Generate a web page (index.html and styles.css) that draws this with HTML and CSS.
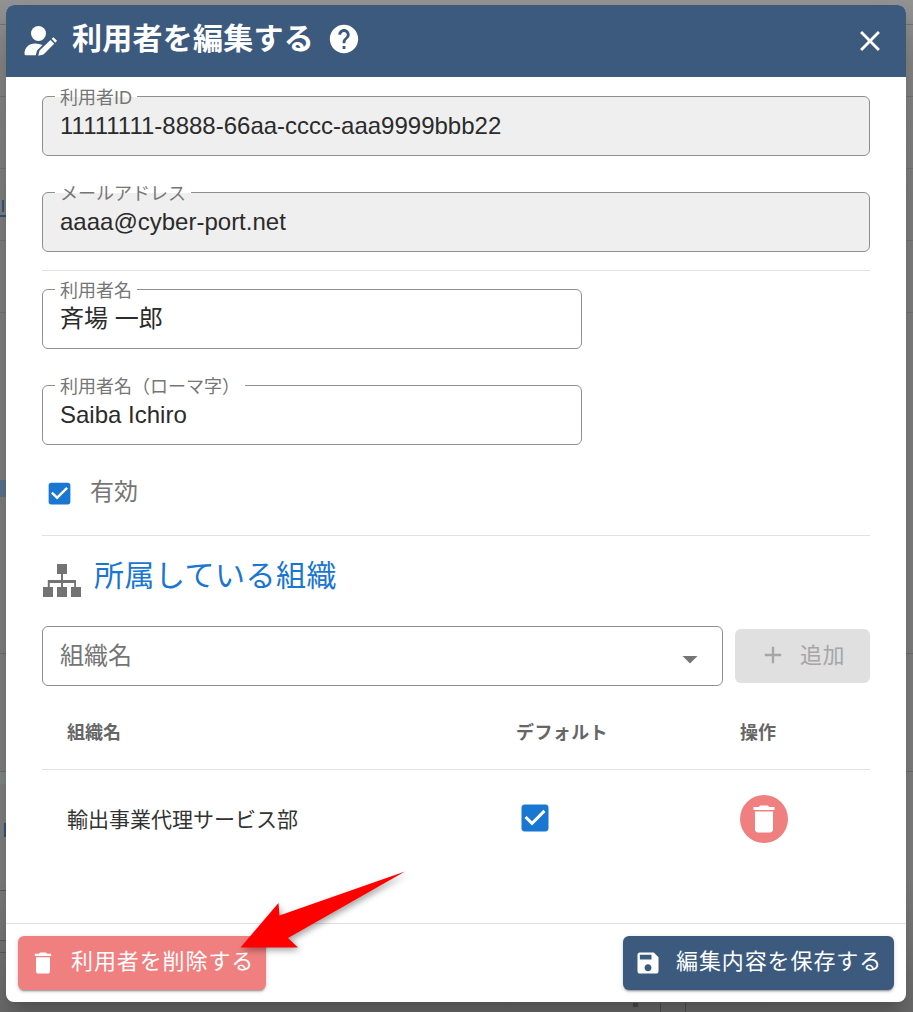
FILE: index.html
```html
<!DOCTYPE html>
<html lang="ja">
<head>
<meta charset="utf-8">
<title>利用者を編集する</title>
<link rel="stylesheet" href="styles.css">
</head>
<body>
<div class="dialog">
  <header class="dialog-head">
    <svg class="i-user" viewBox="0 0 33 30"><circle cx="14.500" cy="7.500" r="7.500"/><path d="M.5 27.500c0-6 4.500-10 10.500-10 2.500 0 5 .5 7.500 1.500L13 24.500l-1.200 4.700H2c-1 0-1.500-.5-1.500-1.700z"/><path d="M14.300 29.700l1.200-5.200L26.500 14l3.700 3.800L19.500 28.500zM27.700 12.800l1.800-1.500 3.500 3.500-1.700 2z"/></svg>
    <h1 class="dialog-title">利用者を編集する</h1>
    <svg class="i-help" viewBox="0 0 24 24"><path d="M12 2C6.480 2 2 6.480 2 12s4.480 10 10 10 10-4.480 10-10S17.520 2 12 2zm1 17h-2v-2h2v2zm2.070-7.750l-.9.920C13.450 12.900 13 13.500 13 15h-2v-.5c0-1.100.45-2.100 1.170-2.830l1.240-1.260c.37-.36.59-.86.59-1.410 0-1.100-.9-2-2-2s-2 .9-2 2H8c0-2.210 1.790-4 4-4s4 1.790 4 4c0 .88-.36 1.680-.93 2.250z"/></svg>
    <svg class="i-close" viewBox="0 0 24 24"><path d="M19 6.410L17.590 5 12 10.590 6.410 5 5 6.410 10.590 12 5 17.590 6.410 19 12 13.410 17.590 19 19 17.590 13.410 12z"/></svg>
  </header>

  <main class="dialog-body">
    <div class="field field-readonly first">
      <span class="field-label">利用者ID</span>
      <span class="field-value">11111111-8888-66aa-cccc-aaa9999bbb22</span>
    </div>
    <div class="field field-readonly">
      <span class="field-label">メールアドレス</span>
      <span class="field-value">aaaa@cyber-port.net</span>
    </div>
    <hr class="rule rule-a">
    <div class="field field-short">
      <span class="field-label">利用者名</span>
      <span class="field-value">斉場 一郎</span>
    </div>
    <div class="field field-short">
      <span class="field-label">利用者名（ローマ字）</span>
      <span class="field-value">Saiba Ichiro</span>
    </div>
    <div class="active-row">
      <svg class="i-check" viewBox="0 0 24 24"><path d="M19 3H5c-1.110 0-2 .9-2 2v14c0 1.100.89 2 2 2h14c1.100 0 2-.9 2-2V5c0-1.110-.89-2-2-2zm-9 14l-5-5 1.410-1.410L10 14.170l7.590-7.590L19 8l-9 9z"/></svg>
      <span class="active-label">有効</span>
    </div>
    <hr class="rule">
    <div class="section-head">
      <svg class="i-org" viewBox="0 0 38 34"><path d="M14 0h10v10h-4v6H33v7h5v10H28V23h3.200v-4H20v4h4v10H14V23h4v-4H6.800v4H10v10H0V23h4.800v-7H18v-6h-4z"/></svg>
      <h2 class="section-title">所属している組織</h2>
    </div>
    <div class="org-picker">
      <div class="field field-select">
        <span class="field-placeholder">組織名</span>
        <svg class="i-drop" viewBox="0 0 24 24"><path d="M7 10l5 5 5-5z"/></svg>
      </div>
      <div class="btn-add">
        <svg class="i-plus" viewBox="0 0 24 24"><path d="M19 13h-6v6h-2v-6H5v-2h6V5h2v6h6v2z"/></svg>
        <span class="btn-add-text">追加</span>
      </div>
    </div>
    <div class="org-row org-row-head">
      <span class="col-name">組織名</span>
      <span class="col-default th-spaced">デフォルト</span>
      <span class="col-op">操作</span>
    </div>
    <div class="org-row org-row-item">
      <span class="col-name">輸出事業代理サービス部</span>
      <span class="col-default"><svg class="i-check-lg" viewBox="0 0 24 24"><path d="M19 3H5c-1.110 0-2 .9-2 2v14c0 1.100.89 2 2 2h14c1.100 0 2-.9 2-2V5c0-1.110-.89-2-2-2zm-9 14l-5-5 1.410-1.410L10 14.170l7.590-7.590L19 8l-9 9z"/></svg></span>
      <span class="col-op"><span class="btn-round"><svg class="i-trash-lg" viewBox="0 0 24 24"><path d="M6 19c0 1.100.9 2 2 2h8c1.100 0 2-.9 2-2V7H6v12zM19 4h-3.500l-1-1h-5l-1 1H5v2h14V4z"/></svg></span></span>
    </div>
  </main>

  <footer class="dialog-foot">
    <div class="btn btn-danger">
      <svg class="i-btn" viewBox="0 0 24 24"><path d="M6 19c0 1.100.9 2 2 2h8c1.100 0 2-.9 2-2V7H6v12zM19 4h-3.500l-1-1h-5l-1 1H5v2h14V4z"/></svg>
      <span class="btn-text">利用者を削除する</span>
    </div>
    <div class="btn btn-primary">
      <svg class="i-btn" viewBox="0 0 24 24"><path d="M17 3H5c-1.110 0-2 .9-2 2v14c0 1.100.89 2 2 2h14c1.100 0 2-.9 2-2V7l-4-4zm-5 16c-1.660 0-3-1.340-3-3s1.340-3 3-3 3 1.340 3 3-1.340 3-3 3zm3-10H5V5h10v4z"/></svg>
      <span class="btn-text">編集内容を保存する</span>
    </div>
  </footer>
</div>

<svg class="callout-arrow" viewBox="0 0 180 90" width="180" height="90"><polygon points="240.500,947.500 278.500,903 279.500,915.500 405,871.500 288,938 298,947.500" transform="translate(-235 -865)"/></svg>
</body>
</html>
```
FILE: styles.css
```css
* { box-sizing: border-box; }

html, body { height: 100%; }

body {
  margin: 0;
  width: 913px;
  height: 1012px;
  overflow: hidden;
  padding: 5px 7px 10px 6px;
  position: relative;
  font-family: "Liberation Sans", "Noto Sans CJK JP", sans-serif;
  background-color: #7f7f7f;
  background-repeat: no-repeat;
  background-image:
    linear-gradient(#4f4f4f, #4f4f4f),
    linear-gradient(#4f4f4f, #4f4f4f),
    linear-gradient(#4c4c4c, #4c4c4c),
    linear-gradient(#2f5580, #2f5580),
    linear-gradient(#2f5580, #2f5580),
    linear-gradient(#5a7390, #5a7390),
    linear-gradient(#2f5580, #2f5580),
    linear-gradient(#6d6d6d, #6d6d6d),
    linear-gradient(#6d6d6d, #6d6d6d),
    linear-gradient(#5c5c5c, #5c5c5c),
    linear-gradient(#5c5c5c, #5c5c5c),
    linear-gradient(#5c5c5c, #5c5c5c),
    linear-gradient(#808888, #808888),
    linear-gradient(#747474, #747474),
    linear-gradient(#747474, #747474),
    linear-gradient(#747474, #747474),
    linear-gradient(#747474, #747474),
    linear-gradient(#747474, #747474),
    linear-gradient(#747474, #747474),
    linear-gradient(to bottom, #939393 0, #858585 60px, #7f7f7f 200px, #7f7f7f 880px, #6b6b6b 1012px);
  background-position:
    660px 1003px, 685px 1003px, 633px 1003px,
    0 215px, 2px 200px, 0 480px, 4px 823px,
    0 653px, 0 771px,
    0 890px, 0 940px, 0 952px,
    0 771px,
    0 24px, 0 96px, 0 168px, 0 240px, 0 312px, 0 653px,
    0 0;
  background-size:
    1px 9px, 1px 9px, 5px 4px,
    6px 2px, 2px 12px, 6px 17px, 2px 14px,
    100% 1px, 100% 1px,
    6px 1px, 6px 1px, 6px 1px,
    6px 13px,
    100% 1px, 100% 1px, 100% 1px, 100% 1px, 100% 1px, 100% 1px,
    100% 100%;
}

.dialog {
  width: 900px;
  height: 997px;
  display: flex;
  flex-direction: column;
  background: #fff;
  border-radius: 8px;
  overflow: hidden;
  box-shadow: 0 11px 15px -7px rgba(0,0,0,.2), 0 24px 38px 3px rgba(0,0,0,.14);
}

/* header */
.dialog-head {
  height: 72px;
  flex: none;
  display: flex;
  align-items: center;
  background: #3c5a7e;
  color: #fff;
  padding: 0 18px;
}
.dialog-head svg { fill: #fff; flex: none; }
.i-user { width: 33px; height: 30px; }
.dialog-title {
  margin: -4px 0 0 15px;
  font-size: 30px;
  font-weight: 700;
  letter-spacing: .25px;
  line-height: 1;
}
.i-help { width: 34px; height: 34px; margin-left: 13px; margin-top: -4px; }
.i-close { width: 34px; height: 34px; margin-left: auto; margin-right: 1px; }

/* body */
.dialog-body {
  flex: 1;
  padding: 0 36px;
  display: flex;
  flex-direction: column;
}
.field {
  position: relative;
  height: 60px;
  flex: none;
  border: 1px solid #8f8f8f;
  border-radius: 6px;
  padding: 0 17px;
  display: flex;
  align-items: center;
  margin-top: 36px;
  background: #fff;
}
.field.first { margin-top: 19px; }
.field-readonly { background: #efefef; }
.field-short { width: 540px; }
.rule + .field { margin-top: 18px; }

.field-label {
  position: absolute;
  left: 12px;
  top: -9px;
  height: 20px;
  line-height: 20px;
  padding: 0 5px;
  font-size: 18px;
  color: #767676;
  white-space: nowrap;
  background: linear-gradient(#fff 9px, transparent 9px);
}
.field-readonly .field-label { background: linear-gradient(#fff 9px, #efefef 9px); }
.field-value {
  font-size: 24px;
  color: #2b2b2b;
  line-height: 28px;
}
.rule {
  flex: none;
  margin: 18px 0 0;
  border: 0;
  height: 1px;
  background: #e0e0e0;
}

.active-row {
  flex: none;
  height: 46px;
  margin-top: 24px;
  display: flex;
  align-items: center;
}
.i-check { width: 29px; height: 29px; fill: #1976d2; margin-left: 3px; flex: none; margin-top: 3px; }
.active-label { font-size: 24px; color: #757575; margin-left: 16px; position: relative; top: -3px; }
.active-row + .rule { margin-top: 20px; }

.section-head {
  flex: none;
  height: 82px;
  display: flex;
  align-items: center;
}
.i-org { width: 38px; height: 34px; fill: #737373; margin-left: 1px; flex: none; margin-top: 7px; }
.section-title {
  margin: 0 0 0 13px;
  font-size: 30px;
  font-weight: 400;
  color: #1976d2;
  line-height: 1;
  letter-spacing: .5px;
  position: relative;
  top: -1px;
}

.org-picker {
  flex: none;
  margin-top: 8px;
  display: flex;
  gap: 12px;
  align-items: center;
}
.field-select {
  margin-top: 0;
  flex: 1;
  justify-content: space-between;
}
.field-placeholder { font-size: 24px; color: #757575; position: relative; top: -3px; }
.i-drop { width: 36px; height: 36px; fill: #757575; margin-right: -3px; margin-top: 6px; flex: none; }
.btn-add {
  flex: none;
  width: 135px;
  height: 54px;
  border-radius: 6px;
  background: #e0e0e0;
  color: #a6a6a6;
  font-size: 22px;
  letter-spacing: .5px;
  display: flex;
  align-items: center;
  padding-left: 24px;
  gap: 13px;
}
.btn-add-text { position: relative; top: -3px; }
.i-plus { width: 28px; height: 28px; fill: #a6a6a6; flex: none; margin-top: -2px; }

.org-row {
  flex: none;
  display: grid;
  grid-template-columns: 449px 224px 1fr;
  padding-left: 25px;
  align-items: center;
}
.org-row-head {
  height: 84px;
  padding-top: 6px;
  border-bottom: 1px solid #e0e0e0;
  font-size: 18px;
  font-weight: 700;
  color: #666;
}
.th-spaced { letter-spacing: .4px; }
.org-row-item { height: 97px; font-size: 21px; color: #333; }
.org-row-item .col-name { position: relative; top: -1px; }
.org-row-item .col-default { display: flex; }
.i-check-lg { width: 36px; height: 36px; fill: #1976d2; margin-top: -1px; margin-left: 1px; }
.btn-round {
  width: 48px;
  height: 48px;
  border-radius: 50%;
  background: #f08080;
  display: flex;
  align-items: center;
  justify-content: center;
}
.i-trash-lg { width: 36px; height: 36px; fill: #fff; }

/* footer */
.dialog-foot {
  flex: none;
  height: 79px;
  border-top: 1px solid #e0e0e0;
  padding: 12px 12px 0;
  display: flex;
  justify-content: space-between;
  align-items: flex-start;
}
.btn {
  height: 54px;
  border-radius: 6px;
  display: flex;
  align-items: center;
  color: #fff;
  font-size: 22px;
  letter-spacing: .9px;
  box-shadow: 0 3px 1px -2px rgba(0,0,0,.2), 0 2px 2px rgba(0,0,0,.14), 0 1px 5px rgba(0,0,0,.12);
  padding-left: 11px;
}
.btn-text { position: relative; top: -4px; }
.btn-danger { width: 248px; background: #f08080; gap: 14px; }
.btn-primary { width: 271px; background: #3c5a7e; gap: 14px; }
.i-btn { width: 28px; height: 28px; fill: #fff; flex: none; }

/* annotation drawn over the screenshot */
.callout-arrow {
  position: absolute;
  left: 235px;
  top: 865px;
  fill: #ff0000;
  filter: drop-shadow(2px 3px 3px rgba(0,0,0,.35));
}
```
